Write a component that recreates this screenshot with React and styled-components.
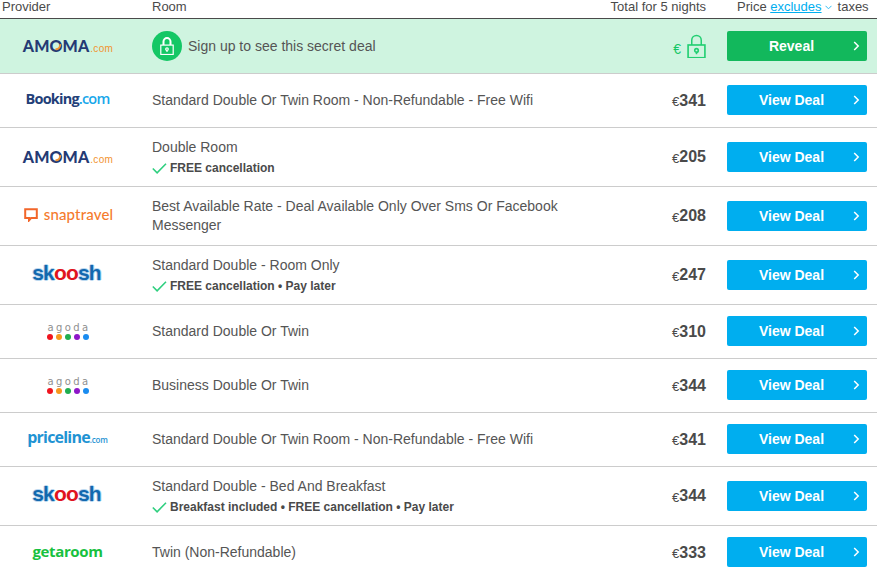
import React from 'react';
import styled, { createGlobalStyle } from 'styled-components';

const GlobalStyle = createGlobalStyle`
  html, body { margin: 0; padding: 0; background: #fff; overflow: hidden; }
  body { font-family: "Liberation Sans", Arial, sans-serif; color: #4a4a4a; }
`;

const Table = styled.div`
  width: 877px;
`;

const HeaderRow = styled.div`
  display: grid;
  grid-template-columns: 152px 458px 117px 150px;
  height: 18px;
  border-bottom: 1px solid #4a4a4a;
  font-size: 13px;
  line-height: 13px;
`;

const HeaderCell = styled.div`
  padding-left: ${p => p.$pad || 0}px;
  padding-right: ${p => p.$padRight || 0}px;
  text-align: ${p => p.$right ? 'right' : 'left'};
  white-space: nowrap;
`;

const TaxLink = styled.span`
  color: #00aeef;
  text-decoration: underline;
`;

const Caret = styled.svg`
  width: 7px;
  height: 5px;
  margin: 0 6px 1px 3px;
`;

const Row = styled.div`
  display: grid;
  grid-template-columns: 152px 458px 117px 150px;
  align-items: center;
  height: ${p => p.$tall ? 58 : p.$secret ? 54 : 53}px;
  border-bottom: 1px solid #ccc;
  background: ${p => p.$secret ? '#cff4e0' : '#fff'};
`;

const LogoCell = styled.div`
  display: flex;
  justify-content: center;
  align-items: center;
  width: 135px;
  padding-bottom: 2px;
`;

const RoomCell = styled.div`
  font-size: 14px;
  line-height: 19px;
  color: #555;
`;

const RoomTitle = styled.div`
  width: 440px;
`;

const Perk = styled.div`
  display: flex;
  align-items: center;
  font-size: 12px;
  font-weight: 700;
  line-height: 16px;
  margin-top: 3px;
  color: #4a4a4a;
`;

const Check = styled.svg`
  width: 15px;
  height: 11px;
  margin-right: 3px;
`;

const SecretRoom = styled.div`
  display: flex;
  align-items: center;
  gap: 6px;
  font-size: 14px;
  color: #555;
`;

const LockBadge = styled.span`
  width: 30px;
  height: 30px;
  border-radius: 50%;
  background: #14c765;
  display: flex;
  align-items: center;
  justify-content: center;
`;

const PriceCell = styled.div`
  display: flex;
  justify-content: flex-end;
  align-items: center;
  padding-right: 21px;
  font-size: 16px;
  font-weight: 700;
  color: #4a4a4a;
`;

const Euro = styled.span`
  font-size: ${p => p.$secret ? 14 : 13}px;
  font-weight: 400;
  margin-top: ${p => p.$secret ? 6 : 2}px;
  color: ${p => p.$secret ? '#14c765' : '#4a4a4a'};
  margin-right: ${p => p.$secret ? 6 : 0}px;
`;

const DealButton = styled.div`
  position: relative;
  box-sizing: border-box;
  width: 140px;
  height: 30px;
  margin-bottom: 1px;
  padding-right: 11px;
  border-radius: 2px;
  background: ${p => p.$reveal ? '#12b85c' : '#00aeef'};
  color: #fff;
  font-size: 14px;
  font-weight: 700;
  line-height: 30px;
  text-align: center;
`;

const Chevron = styled.svg`
  position: absolute;
  right: 7px;
  top: 10px;
  width: 7px;
  height: 10px;
`;

const Amoma = styled.span`
  display: inline-flex;
  align-items: baseline;
  margin-left: 1px;
  font-family: "Lato", sans-serif;
  font-weight: 900;
  font-size: 16px;
  letter-spacing: 0.1px;
  color: #243a74;
`;

const AmomaDomain = styled.span`
  margin-left: 1px;
  font-family: "Liberation Sans", sans-serif;
  font-size: 10px;
  font-weight: 400;
  color: #f2932f;
  letter-spacing: 0.3px;
`;

const AmomaO = styled.span`
  position: relative;
`;

const AmomaArc = styled.svg`
  position: absolute;
  left: 4px;
  top: 6px;
  width: 9px;
  height: 9px;
`;

const Booking = styled.span`
  margin-bottom: 2px;
  font-family: "Open Sans", sans-serif;
  font-weight: 700;
  font-size: 14.5px;
  letter-spacing: -0.8px;
  color: #233f78;
`;

const BookingDomain = styled.span`
  color: #18a7ea;
  font-weight: 600;
`;

const Snap = styled.span`
  display: flex;
  align-items: center;
  gap: 6px;
  margin-left: 2px;
  font-family: "Lato", sans-serif;
  font-weight: 500;
  font-size: 15px;
  letter-spacing: 0.15px;
  color: #f57b2d;
`;

const SnapName = styled.span`
  margin-bottom: 3px;
`;

const Skoosh = styled.span`
  margin: 0 2px 2px 0;
  font-family: "Liberation Sans", sans-serif;
  font-weight: 700;
  font-size: 21px;
  letter-spacing: -0.8px;
  color: #1268ae;
  text-shadow: 1px 0 #bcd9f0, -1px 0 #bcd9f0, 0 1px #bcd9f0, 0 -1px #bcd9f0;
`;

const SkooshSwirl = styled.span`
  color: #e0141e;
  text-shadow: none;
`;

const AgodaBox = styled.span`
  display: flex;
  flex-direction: column;
  align-items: center;
  margin-right: -3px;
  padding-top: 1px;
  font-family: "DejaVu Sans", sans-serif;
  font-size: 10px;
  line-height: 10px;
  letter-spacing: 2.4px;
  color: #8f8f8f;
`;

const AgodaDots = styled.span`
  display: flex;
  gap: 3px;
  margin: 1px 3px 0 0;
`;

const AgodaDot = styled.i`
  width: 6px;
  height: 6px;
  border-radius: 50%;
  background: ${p => p.$c};
`;

const Priceline = styled.span`
  margin-bottom: 3px;
  font-family: "Open Sans", sans-serif;
  font-weight: 700;
  font-size: 16px;
  letter-spacing: -0.8px;
  color: #1f93d3;
`;

const PricelineDomain = styled.span`
  font-size: 8px;
  font-weight: 600;
  letter-spacing: -0.2px;
`;

const Getaroom = styled.span`
  margin-bottom: 2px;
  font-family: "Open Sans", sans-serif;
  font-weight: 700;
  font-size: 15px;
  letter-spacing: -0.35px;
  color: #18c13f;
`;

const LockIcon = ({ size = 14, color = '#fff', shackle = 2 }) => (
  <svg width={size} height={size * 1.3} viewBox="0 0 14 18" fill="none" stroke={color} strokeWidth="1.2">
    <path d="M3.5 8V4.5a3.5 3.5 0 0 1 7 0V8" strokeWidth={shackle} />
    <rect x="0.8" y="8" width="12.4" height="9.4" />
    <circle cx="7" cy="12" r="1.3" />
    <path d="M7 13.3v1.5" />
  </svg>
);

const AmomaLogo = () => (
  <Amoma>
    AM
    <AmomaO>
      O
      <AmomaArc viewBox="0 0 9 9" fill="none" stroke="#f2932f" strokeWidth="1.8">
        <path d="M1.5 7.2c2.4.3 4.6-1.2 5-5" />
      </AmomaArc>
    </AmomaO>
    MA<AmomaDomain>.com</AmomaDomain>
  </Amoma>
);
const BookingLogo = () => <Booking>Booking<BookingDomain>.com</BookingDomain></Booking>;
const SnapLogo = () => (
  <Snap>
    <svg width="14" height="14" viewBox="0 0 14 14" fill="none" stroke="#f2662a" strokeWidth="2">
      <path d="M5 10H1.2V1.2h11.6V10H7l-2 2.4z" />
    </svg>
    <SnapName>snaptravel</SnapName>
  </Snap>
);
const SkooshLogo = () => <Skoosh>sk<SkooshSwirl>oo</SkooshSwirl>sh</Skoosh>;
const AgodaLogo = () => (
  <AgodaBox>
    agoda
    <AgodaDots>
      {['#f0141e', '#f7981d', '#1fae4f', '#8e17c9', '#1a8cf0'].map(c => <AgodaDot key={c} $c={c} />)}
    </AgodaDots>
  </AgodaBox>
);
const PricelineLogo = () => <Priceline>priceline<PricelineDomain>.com</PricelineDomain></Priceline>;
const GetaroomLogo = () => <Getaroom>getaroom</Getaroom>;

const deals = [
  { logo: <BookingLogo />, room: 'Standard Double Or Twin Room - Non-Refundable - Free Wifi', price: 341 },
  { logo: <AmomaLogo />, room: 'Double Room', perk: 'FREE cancellation', price: 205, tall: true },
  { logo: <SnapLogo />, room: 'Best Available Rate - Deal Available Only Over Sms Or Facebook Messenger', price: 208, tall: true },
  { logo: <SkooshLogo />, room: 'Standard Double - Room Only', perk: 'FREE cancellation • Pay later', price: 247, tall: true },
  { logo: <AgodaLogo />, room: 'Standard Double Or Twin', price: 310 },
  { logo: <AgodaLogo />, room: 'Business Double Or Twin', price: 344 },
  { logo: <PricelineLogo />, room: 'Standard Double Or Twin Room - Non-Refundable - Free Wifi', price: 341 },
  { logo: <SkooshLogo />, room: 'Standard Double - Bed And Breakfast', perk: 'Breakfast included • FREE cancellation • Pay later', price: 344, tall: true },
  { logo: <GetaroomLogo />, room: 'Twin (Non-Refundable)', price: 333 },
];

const Arrow = () => (
  <Chevron viewBox="0 0 7 10" fill="none" stroke="#fff" strokeWidth="1.5">
    <path d="M1.2 1l4 4-4 4" />
  </Chevron>
);

const App = () => (
  <>
    <GlobalStyle />
    <Table>
      <HeaderRow>
        <HeaderCell $pad={2}>Provider</HeaderCell>
        <HeaderCell>Room</HeaderCell>
        <HeaderCell $right $padRight={21}>Total for 5 nights</HeaderCell>
        <HeaderCell $pad={10}>
          Price <TaxLink>excludes</TaxLink>
          <Caret viewBox="0 0 7 5" fill="none" stroke="#33bdf2" strokeWidth="1"><path d="M.5.8l3 3 3-3" /></Caret>
          taxes
        </HeaderCell>
      </HeaderRow>
      <Row $secret>
        <LogoCell><AmomaLogo /></LogoCell>
        <SecretRoom>
          <LockBadge><LockIcon /></LockBadge>
          Sign up to see this secret deal
        </SecretRoom>
        <PriceCell>
          <Euro $secret>€</Euro>
          <LockIcon size={19} color="#22cf72" shackle={1.1} />
        </PriceCell>
        <DealButton $reveal>Reveal<Arrow /></DealButton>
      </Row>
      {deals.map((d, i) => (
        <Row key={i} $tall={d.tall}>
          <LogoCell>{d.logo}</LogoCell>
          <RoomCell>
            <RoomTitle>{d.room}</RoomTitle>
            {d.perk && (
              <Perk>
                <Check viewBox="0 0 15 11" fill="none" stroke="#2fcf7f" strokeWidth="1.6"><path d="M.8 5.5l4.3 4.3L14 .8" /></Check>
                {d.perk}
              </Perk>
            )}
          </RoomCell>
          <PriceCell><Euro>€</Euro>{d.price}</PriceCell>
          <DealButton>View Deal<Arrow /></DealButton>
        </Row>
      ))}
    </Table>
  </>
);

export default App;
